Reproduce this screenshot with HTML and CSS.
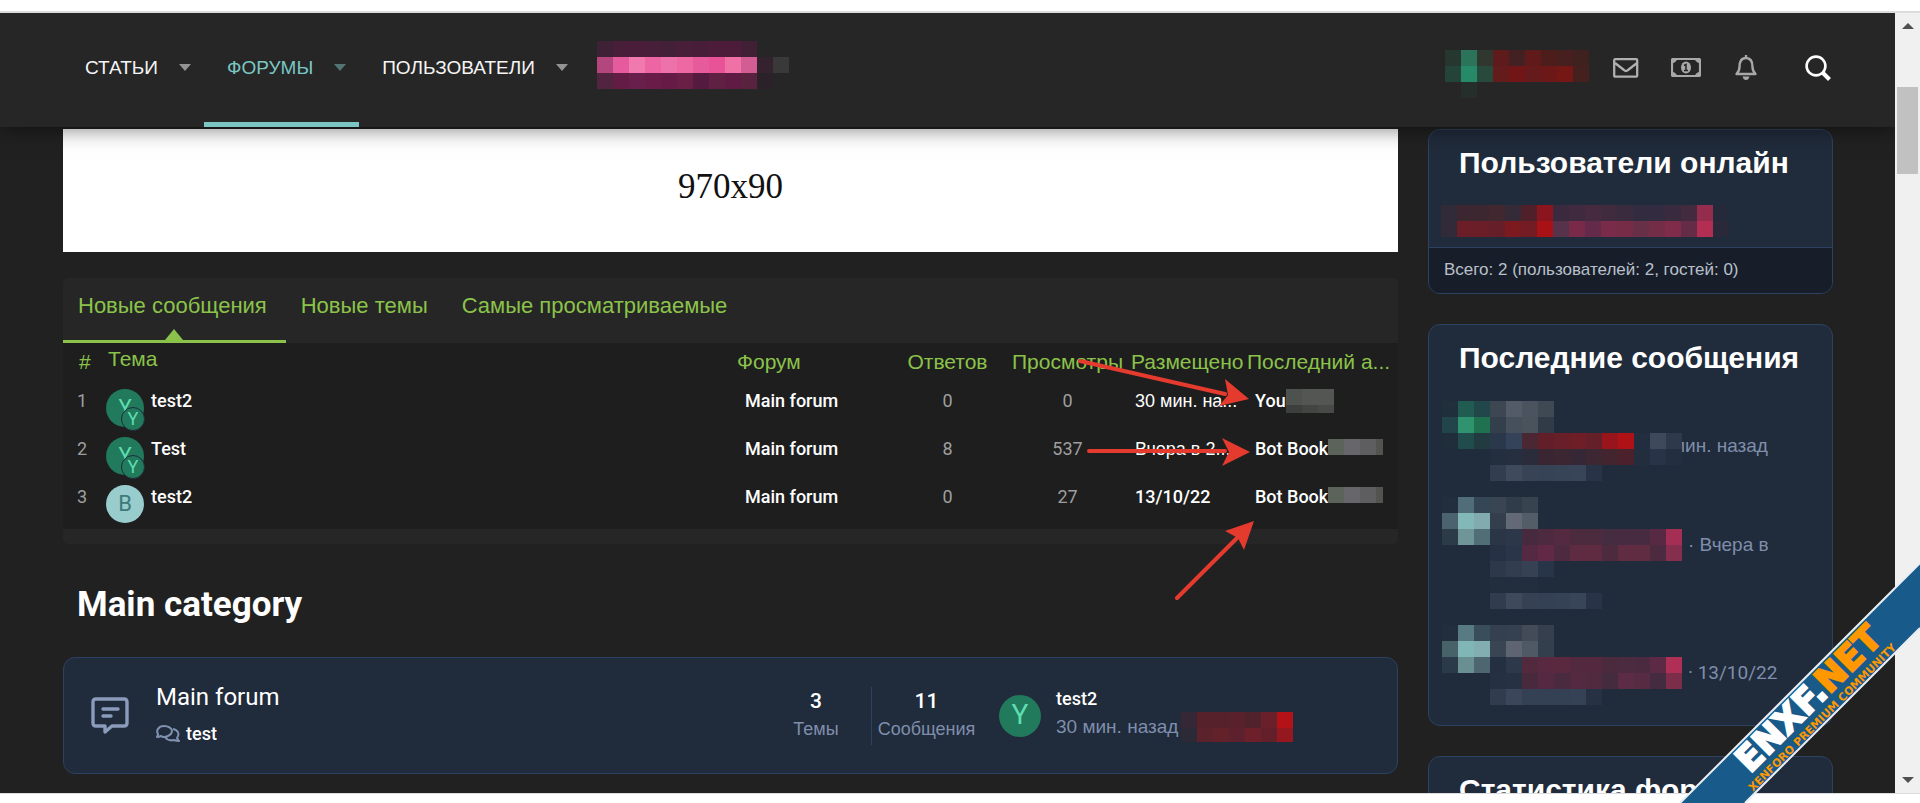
FILE: index.html
```
<!DOCTYPE html>
<html lang="ru">
<head>
    <meta charset="UTF-8">
    <meta name="viewport" content="width=device-width, initial-scale=1.0">
    <title>Форумы</title>
    <link rel="stylesheet" href="styles.css">
</head>
<body>
    <div class="window">
        <div class="page">
            <header class="header">
                <nav class="nav">
                    <div class="nav-item"><a href="#">СТАТЬИ</a><button class="caret" aria-label="Открыть меню"></button></div>
                    <div class="nav-item active"><a href="#">ФОРУМЫ</a><button class="caret" aria-label="Открыть меню"></button></div>
                    <div class="nav-item"><a href="#">ПОЛЬЗОВАТЕЛИ</a><button class="caret" aria-label="Открыть меню"></button></div>
                    <svg class="mosaic nav-mosaic" data-cells="3f2135 491e38 4a1d3a 471f3a 431f38 481e39 471d3a 4d1c3b 4e1c3b 412036 . .|b3477d e65b9d f079ad ee65a3 ed72aa ee69a3 e75a9b e85397 f071a6 d15d94 35222f 393939|52243f 631d45 691f4c 6a1c48 661a46 6a1f47 551a3f 602043 5f1b44 59233f 2a2228 ."></svg>
                </nav>
                <div class="tools">
                    <svg class="mosaic user-mosaic" data-cells="25372f 2b745b 30372f 5f1b1b 432022 611a1a 4d1d1c 471f1f 3f2120|24443a 268a68 274a3c 631b1b 721516 651a1b 6c1819 751715 44201f|. 252e2b . . . . . . ."></svg>
                    <button class="tool" aria-label="Переписка">
                        <svg width="26" height="20" viewBox="0 0 26 20" fill="none" stroke="#b0b0b0" stroke-width="2.300" stroke-linejoin="round"><rect x="1.200" y="1.200" width="23" height="17.500" rx="1"/><path d="M2 5l9 7q2 2 4 0l9-7"/></svg>
                    </button>
                    <button class="tool" aria-label="Кошелёк">
                        <svg width="30" height="19" viewBox="0 0 30 19" fill="none" stroke="#a8a8a8" stroke-width="2.200"><rect x="1" y="1" width="28" height="17" rx="1"/><path d="M1 1h5q-1 3-5 4zM29 1h-5q1 3 5 4zM1 18h5q-1-3-5-4zM29 18h-5q1-3 5-4z" fill="#a8a8a8" stroke-width="1"/><ellipse cx="15" cy="9.500" rx="5" ry="6" fill="#a8a8a8" stroke="none"/><path d="M13 7.500l2-1V12M13 12.500h4" stroke="#262626" stroke-width="1.500"/></svg>
                    </button>
                    <button class="tool" aria-label="Оповещения">
                        <svg width="22" height="25" viewBox="0 0 22 25" fill="none" stroke="#a8a8a8" stroke-width="2.400" stroke-linejoin="round"><path d="M11 0v4M4.500 12c0-6 2-9 6.500-9s6.500 3 6.500 9c0 4 1 5 3 7H1.500c2-2 3-3 3-7z"/><path d="M7.500 21.500h7q-1 3.500-3.500 3.500t-3.500-3.500z" fill="#a8a8a8" stroke="none"/></svg>
                    </button>
                    <button class="tool search" aria-label="Поиск">
                        <svg width="26" height="26" viewBox="0 0 26 26" fill="none" stroke="#fff" stroke-width="2.600"><circle cx="11" cy="11" r="9.400"/><path d="M17.500 17.500l7 7" stroke-width="4"/></svg>
                    </button>
                </div>
            </header>

            <div class="content">
                <main class="main">
                    <div class="banner">970x90</div>

                    <section class="panel">
                        <div class="tabs">
                            <a href="#" class="tab current">Новые сообщения</a>
                            <a href="#" class="tab">Новые темы</a>
                            <a href="#" class="tab">Самые просматриваемые</a>
                        </div>
                        <table class="threads">
                            <colgroup>
                                <col class="col-num"><col><col class="col-forum"><col class="col-replies"><col class="col-views"><col class="col-date"><col class="col-last">
                            </colgroup>
                            <thead>
                                <tr><th class="num">#</th><th class="topic">Тема</th><th class="forum">Форум</th><th class="count">Ответов</th><th class="count">Просмотры</th><th class="date">Размещено</th><th class="last">Последний а...</th></tr>
                            </thead>
                            <tbody>
                                <tr>
                                    <td class="num">1</td>
                                    <td><div class="topic-cell"><span class="avatar">Y<span class="avatar-own">Y</span></span><a href="#">test2</a></div></td>
                                    <td class="forum"><a href="#">Main forum</a></td>
                                    <td class="count">0</td>
                                    <td class="count">0</td>
                                    <td class="date">30 мин. на...</td>
                                    <td class="last"><div class="who"><a href="#">You</a><svg class="mosaic who-short" data-cells="4e524e 535653 535653|3c3f3d 434543 484a48"></svg></div></td>
                                </tr>
                                <tr>
                                    <td class="num">2</td>
                                    <td><div class="topic-cell"><span class="avatar">Y<span class="avatar-own">Y</span></span><a href="#">Test</a></div></td>
                                    <td class="forum"><a href="#">Main forum</a></td>
                                    <td class="count">8</td>
                                    <td class="count">537</td>
                                    <td class="date">Вчера в 2...</td>
                                    <td class="last"><div class="who"><a href="#">Bot Book</a><svg class="mosaic who-long" data-cells="5b635b 67666a 5e5d60 53534f"></svg></div></td>
                                </tr>
                                <tr>
                                    <td class="num">3</td>
                                    <td><div class="topic-cell"><span class="avatar light">B</span><a href="#">test2</a></div></td>
                                    <td class="forum"><a href="#">Main forum</a></td>
                                    <td class="count">0</td>
                                    <td class="count">27</td>
                                    <td class="date latin">13/10/22</td>
                                    <td class="last"><div class="who"><a href="#">Bot Book</a><svg class="mosaic who-long" data-cells="5b635b 67666a 5e5d60 53534f"></svg></div></td>
                                </tr>
                            </tbody>
                        </table>
                        <!-- red pointers over the last columns -->
                        <svg class="arrows" width="180" height="245" viewBox="0 0 180 245" fill="#e53a2e" stroke="#e53a2e" stroke-width="4" stroke-linecap="round">
                            <path d="M7 8L152 41M16 98H152M104 245L164 185" fill="none"/>
                            <path d="M152 26l24 20-30 7 9-11zM149 85l28 14-28 14 7-14zM181 168l-29 10 13 7 6 12z" stroke="none"/>
                        </svg>
                    </section>

                    <h2 class="category"><a href="#">Main category</a></h2>

                    <section class="node">
                        <svg class="node-icon" width="38" height="38" viewBox="0 0 38 38" fill="none" stroke="#8a9bbb" stroke-width="3.400" stroke-linejoin="round" stroke-linecap="round"><path d="M5 2h28q3 0 3 3v21q0 3-3 3H21l-7 6v-6H5q-3 0-3-3V5q0-3 3-3zM12 12h15M12 19h8"/></svg>
                        <div class="node-main">
                            <h3><a href="#">Main forum</a></h3>
                            <a href="#" class="subforum"><svg width="24" height="18" viewBox="0 0 24 18" fill="none" stroke="#8191b0" stroke-width="2" stroke-linejoin="round"><path d="M8 1c4 0 8 2 8 5s-4 6-8 6q-2 0-3-1-2 1-4 1 1-2 1-3C0 6 2 1 8 1z"/><path d="M17 4c5 1 7 5 4 9q1 2 2 3-3 0-5-1c-4 1-7 0-9-3"/></svg>test</a>
                        </div>
                        <dl class="stat"><dt>Темы</dt><dd>3</dd></dl>
                        <dl class="stat posts"><dt>Сообщения</dt><dd>11</dd></dl>
                        <div class="extra">
                            <span class="avatar big">Y</span>
                            <div class="extra-text">
                                <a href="#">test2</a>
                                <div class="extra-meta"><time>30 мин. назад</time><svg class="mosaic extra-mosaic" data-cells="352735 57212b 57212b 58212b 4f222c 69202a b21218|2d2a38 5c222c 63222a 5c212c 6d2029 63202a 951720"></svg></div>
                            </div>
                        </div>
                    </section>
                </main>

                <aside class="sidebar">
                    <section class="block">
                        <h3>Пользователи онлайн</h3>
                        <svg class="mosaic" data-cells="312a38 3c2630 3c2630 402730 352a38 50202a 8b151e 3b2a3d 402a40 452a40 402a3e 3b2b3e 332b3f 332b3f 392b3d 432a3e 942c4e 252a3a|322a39 6b1e27 6b1e27 661f28 7d1a20 741c23 a81216 57334b 792a48 632b49 792b49 762b47 673046 732d47 7e2c49 642c47 b32e53 29293a"></svg>
                        <footer>Всего: 2 (пользователей: 2, гостей: 0)</footer>
                    </section>

                    <section class="block">
                        <h3>Последние сообщения</h3>
                        <ul class="posts-list">
                            <li>
                                <svg class="mosaic" data-cells="202f3c 205c51 22474a 3d4752 525b67 4a535e 3f4954 . . . . . . . .|21454a 2e936e 20714f 333f4b 46505a 4a525b 303b47 . . . . . . . .|202d3b 204d4b 213b40 2b374a 34425a 4a2732 621f29 691f27 6d1e26 641f28 98151b ae1116 222e40 3e4a5c 2e394c|. . . 232e3f 252f40 2a2c3c 3a2632 3b2631 362737 3d2732 42252f 4b212c 222d3d 283348 232e40|. . . 323e50 3f4b5d 384456 364255 374356 384457 283348 . . . . ."></svg>
                                <span class="when cut">мин. назад</span>
                            </li>
                            <li>
                                <svg class="mosaic" data-cells="222e3e 506d79 354756 394553 303c49 37434f . . . . . . . . .|4a636e 82b8b8 81abae 333f4c 636975 535d68 . . . . . . . . .|2b3b48 6f9598 516e76 2a3546 2c384a 482a3f 4d2a3f 542a40 4d2b3e 4d2b3e 462c40 472b40 472b40 572943 a52f54|. . . 263145 2a3549 542941 612945 4e2a3e 5f2b42 5e2b41 4d2b3f 602c42 602c42 4c2b40 862e4e|. . . 2d384a 323e50 364254 283548 . . . . . . . .|. . . 222d3d 222d3d 222d3d . . . . . . . . .|. . . 313d4f 3e495b 364254 344053 354154 384457 283347 . . . . ."></svg>
                                <span class="when">· Вчера в</span>
                            </li>
                            <li>
                                <svg class="mosaic" data-cells="222e3e 587a82 394d5b 344050 354150 434b59 353f4e . . . . . . . .|486269 80b6b6 82adb1 394553 5e6471 4f5964 343f4e . . . . . . . .|2a3a49 698f93 4d666f 243041 2d394a 53293e 592941 5a2940 53293f 54293f 4c2a3e 4c2a3f 4b2a3f 5d2a46 b02f57|. . . 253042 263144 482a3c 552941 492a3f 542a40 522a3f 442b3e 5b2c43 572c42 442b3f 7b2d4a|. . . 313c4f 3b465a 344053 344053 344053 354154 263144 . . . . ."></svg>
                                <span class="when latin">· 13/10/22</span>
                            </li>
                        </ul>
                    </section>

                    <section class="block">
                        <h3>Статистика форума</h3>
                    </section>
                </aside>
            </div>
        </div>
        <div class="scrollbar"><i class="up"></i><i class="thumb"></i><i class="down"></i></div>
    </div>

    <svg class="ribbon" width="240" height="240" viewBox="0 0 240 240">
        <path d="M0 240L240 0V65L65 240z" fill="#185a8a"/>
        <path d="M0 240L240 0M65 240L240 65" stroke="#e8eef2" stroke-width="2"/>
        <g transform="translate(70 211) rotate(-45)">
            <text class="ribbon-name white">ENXF.<tspan class="orange">NET</tspan></text>
        </g>
        <g transform="translate(73 229) rotate(-45)">
            <text class="ribbon-sub orange">XENFORO PREMIUM COMMUNITY</text>
        </g>
    </svg>

    <script>
        const size = 16;

        // rows are split by "|", a dot leaves the cell empty
        document.querySelectorAll('.mosaic').forEach(svg => {
            const rows = svg.dataset.cells.split('|').map(row => row.split(' '));
            svg.setAttribute('width', rows[0].length * size);
            svg.setAttribute('height', rows.length * size);
            rows.forEach((row, y) => {
                row.forEach((color, x) => {
                    if (color === '.') return;
                    const rect = document.createElementNS('http://www.w3.org/2000/svg', 'rect');
                    rect.setAttribute('x', x * size);
                    rect.setAttribute('y', y * size);
                    rect.setAttribute('width', size);
                    rect.setAttribute('height', size);
                    rect.setAttribute('fill', '#' + color);
                    svg.appendChild(rect);
                });
            });
        });
    </script>
</body>
</html>
```
FILE: styles.css
```
* {
    box-sizing: border-box;
}

body {
    margin: 0;
    height: 100vh;
    padding: 11px 0 9px;
    overflow: hidden;
    background: #fff;
    color: #fff;
    font-family: "Liberation Sans", Arial, sans-serif;
    font-size: 19px;
}

a {
    color: inherit;
    text-decoration: none;
}

button {
    padding: 0;
    border: 0;
    background: none;
    cursor: pointer;
}

h2, h3, dl, dd, ul {
    margin: 0;
    padding: 0;
}

svg {
    display: block;
    flex: none;
}

.mosaic {
    shape-rendering: crispEdges;
}

.window {
    display: flex;
    height: 100%;
    border-top: 2px solid #dcdcdc;
    border-bottom: 1px solid #dcdcdc;
}

.page {
    flex: 1;
    min-width: 0;
    overflow: hidden;
    background: #212121;
}

/* header */
.header {
    position: relative;
    z-index: 2;
    display: flex;
    justify-content: space-between;
    height: 114px;
    padding: 0 47px 0 62px;
    background: #262626;
    box-shadow: 0 2px 20px rgba(0, 0, 0, 0.5);
}

.nav {
    display: flex;
}

.nav-item {
    display: flex;
    align-items: center;
    gap: 21px;
    padding: 0 13px 0 23px;
    border-bottom: 5px solid transparent;
    color: #f5f5f5;
}

.nav-item.active {
    color: #7bc6c3;
    border-color: #7bc6c3;
}

.caret {
    border: 6px solid transparent;
    border-top: 7px solid currentColor;
    border-bottom: 0;
    color: #fff;
    opacity: 0.5;
}

.active .caret {
    color: #7bc6c3;
}

.nav-mosaic {
    margin: 28px 0 0 16px;
}

.tools {
    display: flex;
    align-items: center;
    padding-bottom: 5px;
}

.user-mosaic {
    margin: 12px 7px 0 0;
}

.tool {
    display: flex;
    justify-content: center;
    width: 60px;
}

.search {
    margin-left: 12px;
}

/* layout */
.content {
    display: flex;
    gap: 30px;
    padding: 2px 62px 0 63px;
}

.main {
    flex: 1;
    min-width: 0;
}

.sidebar {
    width: 405px;
}

.banner {
    height: 123px;
    background: #fff;
    color: #111;
    font-family: "Liberation Serif", "Times New Roman", serif;
    font-size: 35px;
    line-height: 115px;
    text-align: center;
}

/* tabs and thread list */
.panel {
    position: relative;
    margin-top: 26px;
    padding-bottom: 15px;
    border-radius: 5px;
    background: #262626;
}

.tabs {
    display: flex;
    color: #8bc34a;
    font-size: 22px;
}

.tab {
    position: relative;
    height: 65px;
    padding: 0 19px 0 15px;
    border-bottom: 3px solid transparent;
    line-height: 56px;
}

.current {
    border-color: #8bc34a;
}

.current::after {
    content: "";
    position: absolute;
    bottom: 0;
    left: 50%;
    margin-left: -9px;
    border: 9px solid transparent;
    border-top: 0;
    border-bottom: 11px solid #8bc34a;
}

.threads {
    width: 100%;
    table-layout: fixed;
    border-collapse: collapse;
    border-bottom: 6px solid #1e1e1e;
    background: #1e1e1e;
}

.col-num { width: 43px; }
.col-forum { width: 160px; }
.col-replies { width: 115px; }
.col-views { width: 125px; }
.col-date { width: 116px; }
.col-last { width: 152px; }

.threads th {
    height: 36px;
    padding: 2px 0 0;
    color: #8bc34a;
    font-size: 21px;
    font-weight: 400;
    line-height: 34px;
    text-align: left;
    white-space: nowrap;
}

.threads th.num { padding-left: 16px; }
.threads th.topic { padding: 0 0 4px 2px; line-height: 32px; }
.threads th.forum { padding-left: 7px; }
.threads th.date, .threads th.last { padding-left: 1px; }
.threads th.count { text-align: center; }

.threads td {
    height: 48px;
    padding: 10px 0 0;
    font-size: 18px;
    line-height: 24px;
    vertical-align: top;
    white-space: nowrap;
}

.threads td.num, .threads td.count, .latin, .threads td a, .category, .node a, .stat dd {
    font-family: Roboto, sans-serif;
}

.threads td a, .threads td.date.latin {
    font-weight: 500;
}

.threads td.num {
    padding-left: 14px;
    color: #9e9e9e;
}

.threads td.count {
    color: #9e9e9e;
    text-align: center;
}

.threads td.forum { padding-left: 15px; }
.threads td.date { padding-left: 5px; }
.threads td.last { padding-left: 9px; }

.topic-cell, .who {
    display: flex;
    align-items: flex-start;
}

.topic-cell {
    gap: 7px;
}

.avatar {
    position: relative;
    flex: none;
    width: 38px;
    height: 38px;
    border-radius: 50%;
    background: #207a5b;
    color: #5fddb0;
    font-family: Roboto, sans-serif;
    font-size: 22px;
    line-height: 38px;
    text-align: center;
}

.avatar-own {
    position: absolute;
    right: -1px;
    bottom: -4px;
    width: 24px;
    height: 24px;
    border: 1px solid #202b3b;
    border-radius: 50%;
    background: #207a5b;
    font-size: 18px;
    line-height: 22px;
}

.avatar.light {
    background: #99cccc;
    color: #3d7a7a;
}

.avatar.big {
    width: 42px;
    height: 42px;
    font-size: 28px;
    line-height: 40px;
}

.who-short {
    height: 24px;
}

.who-long {
    width: 55px;
    margin-top: 2px;
}

.arrows {
    position: absolute;
    top: 75px;
    right: 145px;
    overflow: visible;
}

/* forum list */
.category {
    margin: 41px 0 32px;
    padding-left: 14px;
    font-size: 35px;
    line-height: 40px;
}

.node {
    display: flex;
    align-items: center;
    height: 117px;
    padding-left: 27px;
    border: 1px solid #2d4260;
    border-radius: 12px;
    background: #202b3b;
}

.node-main {
    flex: 1;
    margin-left: 27px;
}

.node h3 {
    font-size: 24px;
    font-weight: 400;
    line-height: 36px;
}

.subforum {
    display: flex;
    align-items: center;
    gap: 6px;
    font-size: 18px;
    font-weight: 500;
    line-height: 38px;
}

.stat {
    display: flex;
    flex-direction: column-reverse;
    width: 110px;
    padding-bottom: 2px;
    text-align: center;
}

.stat dt {
    color: #7f8eac;
    font-size: 18px;
    line-height: 28px;
}

.stat dd {
    font-size: 21px;
    font-weight: 500;
    line-height: 28px;
}

.posts {
    border-left: 1px solid #2d4260;
}

.extra {
    display: flex;
    align-items: center;
    width: 416px;
    padding-left: 18px;
    gap: 15px;
}

.extra-text {
    padding-bottom: 3px;
    font-size: 18px;
    line-height: 26px;
}

.extra-text a {
    font-weight: 500;
}

.extra-meta {
    display: flex;
    align-items: center;
    gap: 3px;
    color: #7f8eac;
    font-size: 19px;
}

.extra-mosaic {
    height: 30px;
}

/* sidebar */
.block {
    margin-bottom: 30px;
    border: 1px solid #2d4260;
    border-radius: 12px;
    background: #202b3b;
    overflow: hidden;
}

.block h3 {
    padding: 15px 0 24px 30px;
    font-size: 30px;
    line-height: 36px;
    white-space: nowrap;
}

.block > .mosaic {
    margin: 0 0 10px 12px;
}

.block footer {
    padding: 0 0 2px 15px;
    border-top: 1px solid #2d4260;
    background: #181e29;
    color: #b9c0cc;
    font-size: 17px;
    line-height: 43px;
}

.posts-list {
    display: grid;
    gap: 16px;
    padding: 1px 0 20px 13px;
    list-style: none;
}

.posts-list li {
    display: flex;
    gap: 6px;
}

.posts-list .mosaic {
    position: relative;
    z-index: 1;
}

.when {
    padding-top: 36px;
    color: #7f8eac;
    line-height: 24px;
    white-space: nowrap;
}

.when.cut {
    margin-left: -16px;
    padding-top: 33px;
}

/* browser scrollbar */
.scrollbar {
    display: flex;
    flex-direction: column;
    align-items: center;
    width: 25px;
    padding: 10px 0;
    background: #f0f0f0;
}

.up, .down {
    border: 6px solid transparent;
}

.up {
    border-top: 0;
    border-bottom-color: #505050;
}

.down {
    margin-top: auto;
    border-bottom: 0;
    border-top-color: #505050;
}

.thumb {
    width: 21px;
    height: 87px;
    margin-top: 58px;
    background: #c1c1c1;
}

/* corner ribbon */
.ribbon {
    position: absolute;
    right: 0;
    bottom: 0;
    z-index: 5;
    font-family: "DejaVu Sans", sans-serif;
    font-weight: 700;
}

.white {
    fill: #fff;
    stroke: #fff;
}

.orange {
    fill: #ff9800;
    stroke: #ff9800;
}

.ribbon-name {
    font-size: 35px;
    stroke-width: 2px;
}

.ribbon-sub {
    font-size: 11px;
    stroke-width: 0;
}
```
